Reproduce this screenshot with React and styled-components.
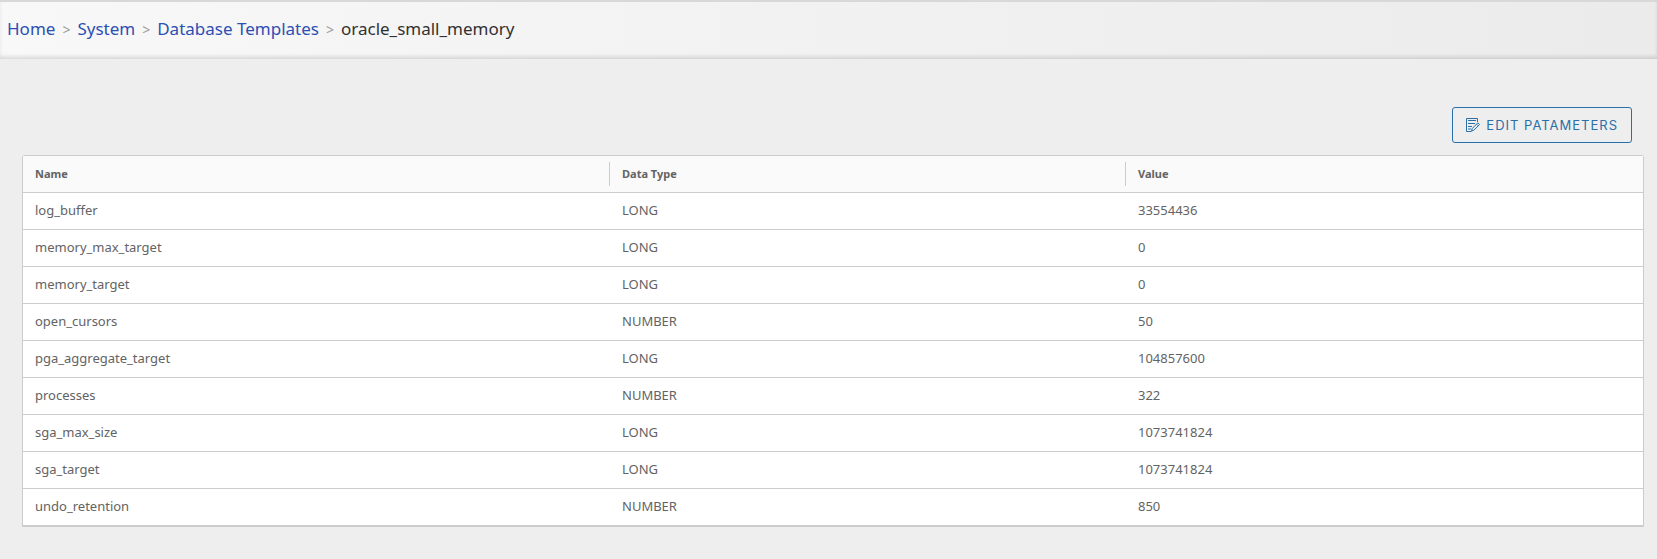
import React from "react";
import styled, { createGlobalStyle } from "styled-components";

const GlobalStyle = createGlobalStyle`
  *, *::before, *::after { box-sizing: border-box; }
  body {
    margin: 0;
    background: #eeeeee;
    color: #636363;
    font-family: "Noto Sans", sans-serif;
    font-size: 13px;
  }
`;

const Header = styled.header`
  display: flex;
  align-items: center;
  height: 59px;
  padding: 0 7px 2px;
  border-top: 2px solid #d8d8d8;
  background: linear-gradient(to right, #f8f8f8, #ebebeb);
  box-shadow: inset 0 -3px 4px -1px rgba(0, 0, 0, 0.14);
`;

const Crumbs = styled.ol`
  display: flex;
  margin: 0;
  padding: 0;
  list-style: none;
  font-size: 17px;
  line-height: 24px;
`;

const Crumb = styled.li`
  color: #313131;

  & + &::before {
    content: ">";
    margin: 0 7px;
    color: #999999;
    font-size: 14px;
  }
`;

const CrumbLink = styled.a`
  color: #2d4fb3;
  text-decoration: none;
`;

const Main = styled.main`
  padding: 48px 13px 31px 22px;
`;

const Toolbar = styled.div`
  display: flex;
  justify-content: flex-end;
  padding: 0 12px 12px 0;
`;

const OutlineButton = styled.button`
  display: flex;
  align-items: center;
  gap: 6px;
  height: 36px;
  padding: 0 13px;
  border: 1px solid #2a6fa8;
  border-radius: 3px;
  background: transparent;
  color: #2a6fa8;
  font: 13px/24px Inter, "Noto Sans", sans-serif;
  letter-spacing: 1px;
  text-transform: uppercase;
  cursor: pointer;
`;

const Grid = styled.table`
  width: 100%;
  table-layout: fixed;
  border: 1px solid #cccccc;
  border-bottom-width: 2px;
  border-radius: 3px 3px 0 0;
  border-collapse: separate;
  border-spacing: 0;
  background: #ffffff;
`;

const HeadCell = styled.th`
  width: ${(p) => p.$width};
  height: 37px;
  padding: 6px 0;
  border-bottom: 1px solid #cccccc;
  background: #fafafa;
  font-size: 11px;
  font-weight: 700;
  line-height: 24px;
  text-align: left;
`;

const HeadLabel = styled.div`
  padding: 0 12px;
  border-right: ${(p) => (p.$divided ? "1px solid #cccccc" : "0")};
`;

const Row = styled.tr`
  &:not(:last-child) > td { border-bottom: 1px solid #cccccc; }
  &:last-child > td { height: 36px; }
`;

const Cell = styled.td`
  height: 37px;
  padding: 0 12px 2px;
  line-height: 24px;
`;

function NoteEditIcon() {
  return (
    <svg width="14" height="14" viewBox="0 0 14 14" fill="none" stroke="currentColor" aria-hidden="true">
      <path d="M11.5 4V.5H.5v13h5" />
      <path d="M2 2.5h8M2 5.5h7M2 8.5h4M2 11h3" />
      <path d="M11.8 4.8l1.7 1.7-5.6 5.7-2.3.8.6-2.4z" />
      <path d="M10.5 6.2l1.7 1.7" strokeWidth="0.8" />
    </svg>
  );
}

const columns = [
  { label: "Name", width: "587px" },
  { label: "Data Type", width: "516px" },
  { label: "Value", width: "auto" },
];

const parameters = [
  ["log_buffer", "LONG", "33554436"],
  ["memory_max_target", "LONG", "0"],
  ["memory_target", "LONG", "0"],
  ["open_cursors", "NUMBER", "50"],
  ["pga_aggregate_target", "LONG", "104857600"],
  ["processes", "NUMBER", "322"],
  ["sga_max_size", "LONG", "1073741824"],
  ["sga_target", "LONG", "1073741824"],
  ["undo_retention", "NUMBER", "850"],
];

export default function App() {
  return (
    <>
      <GlobalStyle />
      <Header>
        <nav aria-label="Breadcrumb">
          <Crumbs>
            {["Home", "System", "Database Templates"].map((label) => (
              <Crumb key={label}><CrumbLink href="#">{label}</CrumbLink></Crumb>
            ))}
            <Crumb aria-current="page">oracle_small_memory</Crumb>
          </Crumbs>
        </nav>
      </Header>
      <Main>
        <Toolbar>
          <OutlineButton type="button"><NoteEditIcon />Edit Patameters</OutlineButton>
        </Toolbar>
        <Grid>
          <thead>
            <tr>
              {columns.map((c, i) => (
                <HeadCell key={c.label} scope="col" $width={c.width}>
                  <HeadLabel $divided={i < columns.length - 1}>{c.label}</HeadLabel>
                </HeadCell>
              ))}
            </tr>
          </thead>
          <tbody>
            {parameters.map((row) => (
              <Row key={row[0]}>
                {row.map((value, i) => <Cell key={i}>{value}</Cell>)}
              </Row>
            ))}
          </tbody>
        </Grid>
      </Main>
    </>
  );
}
